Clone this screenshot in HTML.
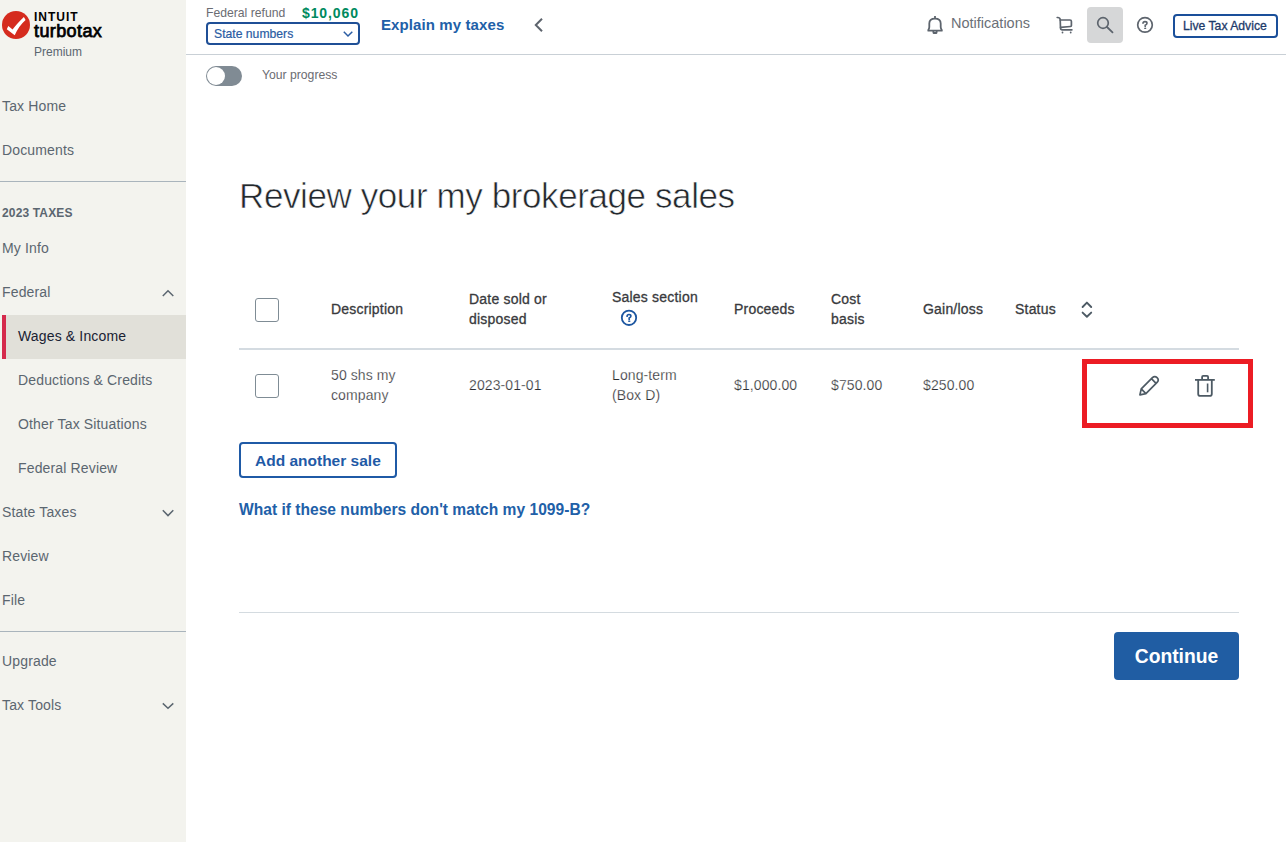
<!DOCTYPE html>
<html><head><meta charset="utf-8">
<style>
*{box-sizing:border-box;margin:0;padding:0}
html,body{width:1286px;height:842px;overflow:hidden;background:#fff;font-family:"Liberation Sans",sans-serif;position:relative}
.a{position:absolute;white-space:nowrap}
#side{position:absolute;left:0;top:0;width:186px;height:842px;background:#f3f3ee}
.nav{position:absolute;left:2px;font-size:14px;line-height:16px;color:#5b6670;letter-spacing:0.15px}
.sub{left:18px}
.sep{position:absolute;left:0;width:186px;height:1px;background:#a9b4bc}
.th{position:absolute;font-size:14px;line-height:20px;color:#393a3d;-webkit-text-stroke:0.3px #393a3d;letter-spacing:0.2px}
.td{position:absolute;font-size:14px;line-height:20px;color:#2b2c2f;-webkit-text-stroke:0.25px #fff;letter-spacing:0.1px}
.cb{position:absolute;left:255px;width:24px;height:24px;border:1px solid #7f8c95;border-radius:3px;background:#fff}
#ov{position:absolute;left:0;top:0;width:1286px;height:842px}
</style></head><body>
<div id="side">
  <div class="a" style="left:34px;top:10px;font-size:12px;font-weight:bold;line-height:14px;letter-spacing:1px;color:#000">INTUIT</div>
  <div class="a" style="left:34px;top:22px;font-size:18px;line-height:18px;letter-spacing:0.4px;color:#000;-webkit-text-stroke:0.75px #000">turbotax</div>
  <div class="a" style="left:34px;top:45px;font-size:12px;line-height:14px;color:#5b6670">Premium</div>

  <div class="nav" style="top:98px">Tax Home</div>
  <div class="nav" style="top:142px">Documents</div>
  <div class="sep" style="top:181px"></div>
  <div class="nav" style="top:205px;font-size:12px;font-weight:bold">2023 TAXES</div>
  <div class="nav" style="top:240px">My Info</div>
  <div class="nav" style="top:284px">Federal</div>
  <div class="a" style="left:2px;top:315px;width:184px;height:44px;background:#e1e0d9"></div>
  <div class="a" style="left:2px;top:315px;width:4px;height:44px;background:#d52a4c"></div>
  <div class="nav sub" style="top:328px;color:#1a2233">Wages &amp; Income</div>
  <div class="nav sub" style="top:372px">Deductions &amp; Credits</div>
  <div class="nav sub" style="top:416px">Other Tax Situations</div>
  <div class="nav sub" style="top:460px">Federal Review</div>
  <div class="nav" style="top:504px">State Taxes</div>
  <div class="nav" style="top:548px">Review</div>
  <div class="nav" style="top:592px">File</div>
  <div class="sep" style="top:631px"></div>
  <div class="nav" style="top:653px">Upgrade</div>
  <div class="nav" style="top:697px">Tax Tools</div>
</div>

<!-- header -->
<div class="a" style="left:186px;top:54px;width:1100px;height:1px;background:#c9d0d6"></div>
<div class="a" style="left:206px;top:6px;font-size:12.2px;line-height:14px;color:#6b6c72">Federal refund</div>
<div class="a" style="left:302px;top:5px;font-size:14px;font-weight:bold;line-height:16px;letter-spacing:0.9px;color:#008a5e">$10,060</div>
<div class="a" style="left:206px;top:22px;width:154px;height:23px;border:2px solid #1f4f96;border-radius:4px"></div>
<div class="a" style="left:214px;top:27px;font-size:12.2px;line-height:14px;color:#2a5ca3;-webkit-text-stroke:0.2px #2a5ca3">State numbers</div>
<div class="a" style="left:381px;top:17px;font-size:15px;font-weight:bold;line-height:16px;letter-spacing:0.1px;color:#2160a8">Explain my taxes</div>
<div class="a" style="left:951px;top:15px;font-size:14.5px;line-height:16px;color:#6b7077">Notifications</div>
<div class="a" style="left:1087px;top:7px;width:36px;height:36px;background:#d6d7d8;border-radius:4px"></div>
<div class="a" style="left:1173px;top:14px;width:105px;height:24px;border:2px solid #1a4f9a;border-radius:4px"></div>
<div class="a" style="left:1183px;top:19px;font-size:12.2px;line-height:14px;color:#1d3a6a;-webkit-text-stroke:0.3px #1d3a6a">Live Tax Advice</div>

<!-- toggle -->
<div class="a" style="left:206px;top:66px;width:36px;height:20px;background:#808b94;border-radius:10px"></div>
<div class="a" style="left:207px;top:67px;width:18px;height:18px;background:#fff;border-radius:50%"></div>
<div class="a" style="left:262px;top:68px;font-size:12.2px;line-height:14px;color:#6b6c72">Your progress</div>

<!-- title -->
<div class="a" style="left:239px;top:176px;font-size:35px;line-height:40px;letter-spacing:-0.4px;color:#23282d;-webkit-text-stroke:0.6px #fff">Review your my brokerage sales</div>

<!-- table header -->
<div class="cb" style="top:298px"></div>
<div class="th" style="left:331px;top:299px">Description</div>
<div class="th" style="left:469px;top:289px">Date sold or<br>disposed</div>
<div class="th" style="left:612px;top:287px">Sales section</div>
<div class="th" style="left:734px;top:299px">Proceeds</div>
<div class="th" style="left:831px;top:289px">Cost<br>basis</div>
<div class="th" style="left:923px;top:299px">Gain/loss</div>
<div class="th" style="left:1015px;top:299px">Status</div>
<div class="a" style="left:239px;top:348px;width:1000px;height:2px;background:#d4dbe1"></div>

<!-- row -->
<div class="cb" style="top:374px"></div>
<div class="td" style="left:331px;top:365px">50 shs my<br>company</div>
<div class="td" style="left:469px;top:375px">2023-01-01</div>
<div class="td" style="left:612px;top:365px">Long-term<br>(Box D)</div>
<div class="td" style="left:734px;top:375px">$1,000.00</div>
<div class="td" style="left:831px;top:375px">$750.00</div>
<div class="td" style="left:923px;top:375px">$250.00</div>
<div class="a" style="left:1082px;top:359px;width:171px;height:69px;border:5px solid #ec1c24"></div>

<!-- add another sale -->
<div class="a" style="left:239px;top:442px;width:158px;height:36px;border:2px solid #1f5aa6;border-radius:4px"></div>
<div class="a" style="left:255px;top:453px;font-size:15.5px;font-weight:bold;line-height:16px;color:#1f5aa6">Add another sale</div>
<div class="a" style="left:239px;top:501px;font-size:15.6px;font-weight:bold;line-height:18px;color:#2160a8">What if these numbers don't match my 1099-B?</div>

<div class="a" style="left:239px;top:612px;width:1000px;height:1px;background:#d4dbe0"></div>
<div class="a" style="left:1114px;top:632px;width:125px;height:48px;background:#205da3;border-radius:4px"></div>
<div class="a" style="left:1114px;top:646px;width:125px;text-align:center;font-size:19.3px;font-weight:bold;line-height:22px;color:#fff">Continue</div>

<svg id="ov" width="1286" height="842" viewBox="0 0 1286 842" fill="none">
  <!-- logo -->
  <circle cx="16" cy="25" r="14" fill="#d52b1e"/>
  <path d="M8.3 26.1 L12.6 29.6 Q15.8 24.8 23.9 17 L25.6 19.9 Q18.6 26 14.7 35.3 L6.8 29.3 Z" fill="#fff"/>
  <!-- sidebar chevrons -->
  <g stroke="#5b6670" stroke-width="1.5">
    <path d="M162.8 296 L168 290.8 L173.3 296"/>
    <path d="M162.8 510.2 L168 515.6 L173.3 510.2"/>
    <path d="M162.8 703.4 L168 708.2 L173.3 703.4"/>
  </g>
  <!-- state numbers chevron -->
  <path d="M343.8 31.8 L348 36 L352.3 31.8" stroke="#2a5ca3" stroke-width="1.5"/>
  <!-- back chevron -->
  <path d="M542 18.8 L535.8 25 L542 31.2" stroke="#5d646d" stroke-width="2"/>
  <!-- bell -->
  <g stroke="#5d646d" stroke-width="1.8" stroke-linejoin="round">
    <path d="M935 16 L935 18.6"/>
    <path d="M929.3 27 L929.3 23.4 Q929.3 18.6 935 18.6 Q940.7 18.6 940.7 23.4 L940.7 27 Q940.7 28.6 941.8 30 L941.8 30.7 L928.3 30.7 L928.3 30 Q929.3 28.6 929.3 27 Z"/>
    <path d="M933.3 31 L933.5 33 L936.5 33 L936.7 31"/>
  </g>
  <!-- cart -->
  <g stroke="#5d646d" stroke-width="1.7" stroke-linecap="round" stroke-linejoin="round">
    <path d="M1057.2 17.5 Q1059.9 17.3 1060.2 19.5 L1060.5 28 Q1060.6 29.8 1062.3 29.8 L1071.9 29.8"/>
    <path d="M1060.3 20 L1070 20 Q1071.4 20 1071.4 21.4 L1071.4 25.5 Q1071.4 26.4 1070.5 26.5 L1060.6 27.4"/>
  </g>
  <circle cx="1062.5" cy="32.5" r="0.9" fill="#5d646d"/>
  <circle cx="1070.7" cy="32.5" r="0.9" fill="#5d646d"/>
  <!-- search -->
  <circle cx="1103" cy="23" r="5.3" stroke="#5d646d" stroke-width="1.7"/>
  <path d="M1107 27 L1112.5 32.3" stroke="#5d646d" stroke-width="1.8" stroke-linecap="round"/>
  <!-- help -->
  <circle cx="1145" cy="24.9" r="7.3" stroke="#5d646d" stroke-width="1.7"/>
  <path d="M1143 23.3 Q1143 21.6 1145 21.6 Q1147 21.6 1147 23.2 Q1147 24.4 1145.2 25.2 L1145.2 26.6" stroke="#5d646d" stroke-width="1.6" stroke-linecap="round"/>
  <rect x="1144.2" y="27.8" width="2" height="1.2" fill="#5d646d"/>
  <!-- table help blue -->
  <circle cx="629" cy="317.8" r="7.2" stroke="#1c56a0" stroke-width="1.8"/>
  <path d="M627.1 316.2 Q627.1 314.5 629 314.5 Q630.9 314.5 630.9 316.1 Q630.9 317.3 629.2 318.1 L629.2 319.4" stroke="#1c56a0" stroke-width="1.7" stroke-linecap="round"/>
  <rect x="628.2" y="320.6" width="2.1" height="1.3" fill="#1c56a0"/>
  <!-- sort -->
  <path d="M1082.6 307 L1086.9 302.6 L1091.2 307 M1082.6 312.6 L1086.9 316.8 L1091.2 312.6" stroke="#4d5a64" stroke-width="1.9" stroke-linecap="round" stroke-linejoin="round"/>
  <!-- pencil -->
  <g transform="translate(1139.9 394.9) rotate(-45)" stroke="#4d5a64" stroke-width="1.7" stroke-linejoin="round">
    <path d="M0 0 L5.2 -3.3 L21 -3.3 Q24.3 -3.3 24.3 0 Q24.3 3.3 21 3.3 L5.2 3.3 Z M5.2 -3.3 L5.2 3.3 M19.6 -3.3 L19.6 3.3"/>
  </g>
  <!-- trash -->
  <g stroke="#4d5a64" stroke-width="1.8">
    <path d="M1195 379.9 L1214.8 379.9"/>
    <path d="M1202.1 379.5 L1202.1 377 Q1202.1 375.9 1203.2 375.9 L1207 375.9 Q1208.1 375.9 1208.1 377 L1208.1 379.5"/>
    <path d="M1198.2 380 L1198.2 393.9 Q1198.2 395.8 1200.1 395.8 L1209.9 395.8 Q1211.8 395.8 1211.8 393.9 L1211.8 380"/>
    <path d="M1207.6 383.5 L1207.6 392.3" stroke-width="1.6"/>
  </g>
</svg>
</body></html>
